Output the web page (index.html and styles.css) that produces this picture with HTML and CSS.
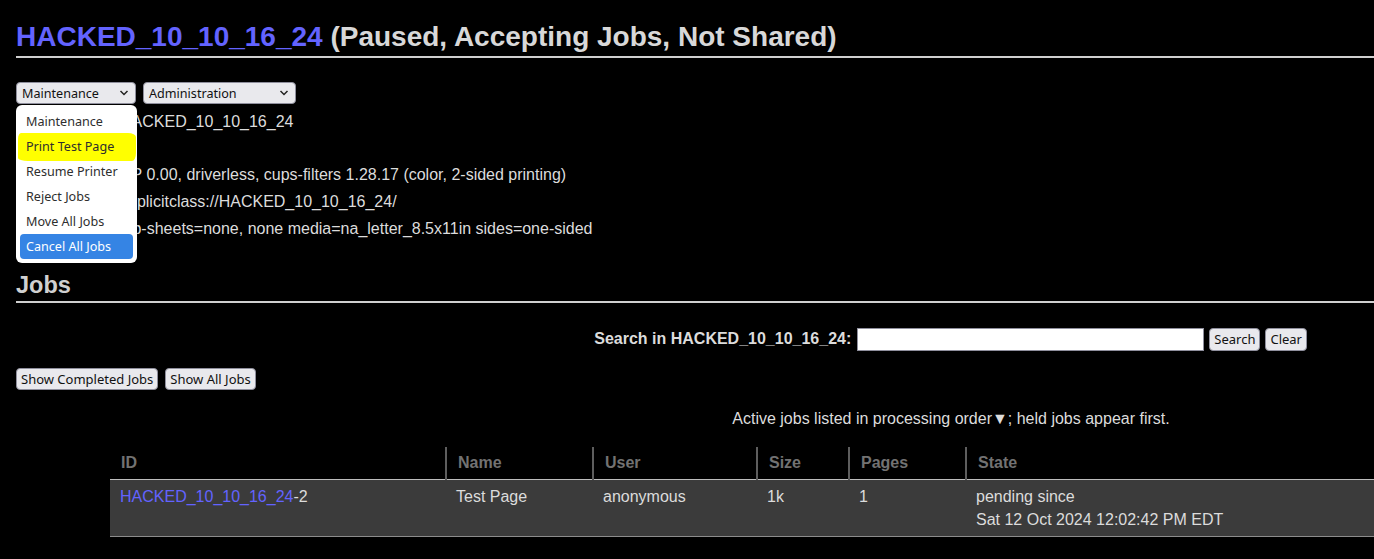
FILE: index.html
```html
<!DOCTYPE html>
<html lang="en">
<head>
<meta charset="utf-8">
<title>HACKED_10_10_16_24 - CUPS</title>
<link rel="stylesheet" href="styles.css">
</head>
<body>
<h1 class="title"><a class="link" href="#">HACKED_10_10_16_24</a> (Paused, Accepting Jobs, Not Shared)</h1>

<div class="actions">
  <div class="select-wrap">
    <div class="select sel-maint"><span>Maintenance</span><svg class="chev" width="10" height="6" viewBox="0 0 10 6"><path d="M1.5 1 L5 4.5 L8.5 1" fill="none" stroke="#222" stroke-width="1.5"/></svg></div>
    <ul class="menu">
      <li class="menu-item">Maintenance</li>
      <li class="menu-item marked"><span class="marker"></span><span class="menu-text">Print Test Page</span></li>
      <li class="menu-item">Resume Printer</li>
      <li class="menu-item">Reject Jobs</li>
      <li class="menu-item">Move All Jobs</li>
      <li class="menu-item active">Cancel All Jobs</li>
    </ul>
  </div>
  <div class="select sel-admin"><span>Administration</span><svg class="chev" width="10" height="6" viewBox="0 0 10 6"><path d="M1.5 1 L5 4.5 L8.5 1" fill="none" stroke="#222" stroke-width="1.5"/></svg></div>
</div>

<div class="info">
  <div class="info-label">Description:</div><div class="info-value">HACKED_10_10_16_24</div>
  <div class="info-label">Location:</div><div class="info-value"></div>
  <div class="info-label">Driver:</div><div class="info-value">HP 0.00, driverless, cups-filters 1.28.17 (color, 2-sided printing)</div>
  <div class="info-label">Connection:</div><div class="info-value">implicitclass://HACKED_10_10_16_24/</div>
  <div class="info-label">Defaults:</div><div class="info-value">job-sheets=none, none media=na_letter_8.5x11in sides=one-sided</div>
</div>

<h2 class="section">Jobs</h2>

<form class="search">
  <label class="search-label">Search in HACKED_10_10_16_24:</label>
  <input class="search-input" type="text">
  <button class="btn" type="button">Search</button>
  <button class="btn" type="button">Clear</button>
</form>

<div class="job-buttons">
  <button class="btn" type="button">Show Completed Jobs</button>
  <button class="btn" type="button">Show All Jobs</button>
</div>

<p class="order-note">Active jobs listed in processing order▼; held jobs appear first.</p>

<table class="jobs">
  <colgroup>
    <col class="c-id"><col class="c-name"><col class="c-user"><col class="c-size"><col class="c-pages"><col class="c-state">
  </colgroup>
  <thead>
    <tr><th class="first">ID</th><th>Name</th><th>User</th><th>Size</th><th>Pages</th><th>State</th></tr>
  </thead>
  <tbody>
    <tr>
      <td><a class="link" href="#">HACKED_10_10_16_24</a>-2</td>
      <td>Test Page</td>
      <td>anonymous</td>
      <td>1k</td>
      <td>1</td>
      <td>pending since<br>Sat 12 Oct 2024 12:02:42 PM EDT</td>
    </tr>
  </tbody>
</table>
</body>
</html>
```

FILE: styles.css
```css
html, body {
  overflow: hidden;
}
body {
  margin: 0;
  padding: 0 16px;
  background: #000;
  color: #dcdcdc;
  font-family: "Liberation Sans", Arial, sans-serif;
  font-size: 16px;
}
.link {
  color: #6363ff;
  text-decoration: none;
}
.title {
  margin: 20px -16px 0 0;
  font-size: 28px;
  line-height: 34px;
  font-weight: bold;
  color: #d8d8d8;
  padding-bottom: 2px;
  border-bottom: 2px solid #cfcfcf;
}
.actions {
  margin-top: 24px;
  display: flex;
  gap: 7px;
  font-family: "Noto Sans", sans-serif;
  font-size: 12.6px;
}
.select-wrap {
  position: relative;
}
.select {
  box-sizing: border-box;
  height: 22px;
  display: flex;
  align-items: center;
  justify-content: space-between;
  padding: 0 6px 0 5px;
  background: #e9e9ed;
  border: 1px solid #8f8f9d;
  border-radius: 4px;
  color: #111;
}
.sel-maint { width: 120px; }
.sel-admin { width: 153px; }
.menu {
  position: absolute;
  top: 23px;
  left: 0;
  z-index: 5;
  width: 121px;
  box-sizing: border-box;
  margin: 0;
  padding: 4px;
  list-style: none;
  background: #fff;
  border-radius: 6px;
  box-shadow: 0 0 0 1px rgba(0,0,0,0.15);
}
.menu-item {
  position: relative;
  height: 25px;
  line-height: 25px;
  padding-left: 6px;
  color: #2e2e2e;
  border-radius: 4px;
  white-space: nowrap;
}
.menu-item.active {
  background: #3584e4;
  color: #fff;
}
.marker {
  position: absolute;
  left: -2px;
  right: -3px;
  top: -1px;
  bottom: -2px;
  background: #ffff00;
  border-radius: 3px 8px 4px 10px / 6px 4px 8px 3px;
}
.menu-text {
  position: relative;
}
.info {
  margin-top: 5px;
  display: grid;
  grid-template-columns: 100px auto;
  column-gap: 4px;
  line-height: 26.7px;
}
.info-label {
  text-align: right;
  font-weight: bold;
}
.info-value {
  min-height: 26.7px;
}
.section {
  margin: 27px -16px 0 0;
  font-size: 23.5px;
  line-height: 30px;
  font-weight: bold;
  color: #d0d0d0;
  padding-bottom: 1px;
  border-bottom: 2px solid #cfcfcf;
}
.search {
  margin: 25px 0 0;
  padding-right: 51px;
  display: flex;
  justify-content: flex-end;
  align-items: center;
  gap: 5px;
}
.search-label {
  font-weight: bold;
  color: #dcdcdc;
  margin-right: 1px;
}
.search-input {
  box-sizing: border-box;
  width: 347px;
  height: 23px;
  margin: 0;
  border: 1px solid #8f8f9d;
  background: #fff;
}
.btn {
  box-sizing: border-box;
  height: 23px;
  margin: 0;
  padding: 0 4px;
  background: #e9e9ed;
  border: 1px solid #8f8f9d;
  border-radius: 4px;
  color: #111;
  font-family: "Noto Sans", sans-serif;
  font-size: 13px;
}
.job-buttons {
  margin-top: 17px;
  display: flex;
  gap: 7px;
}
.job-buttons .btn {
  height: 22px;
  padding: 0 4px;
}
.order-note {
  margin: 19px 0 0;
  padding-left: 528px;
  text-align: center;
  line-height: 20px;
}
.jobs {
  margin: 18px 0 0 94px;
  width: 1300px;
  border-collapse: collapse;
  table-layout: fixed;
}
.c-id { width: 336px; }
.c-name { width: 147px; }
.c-user { width: 164px; }
.c-size { width: 92px; }
.c-pages { width: 117px; }
.jobs th {
  text-align: left;
  font-weight: bold;
  color: #727272;
  height: 33px;
  box-sizing: border-box;
  padding: 0 0 0 11px;
  border-left: 2px solid #5e5e5e;
  border-bottom: 1px solid #bdbdbd;
  line-height: 23px;
  vertical-align: middle;
}
.jobs th.first {
  border-left: 0;
  padding-left: 11px;
}
.jobs td {
  background: #3b3b3b;
  color: #dcdcdc;
  padding: 5px 10px;
  line-height: 23px;
  vertical-align: top;
  border-bottom: 1px solid #8c8c8c;
}
```
